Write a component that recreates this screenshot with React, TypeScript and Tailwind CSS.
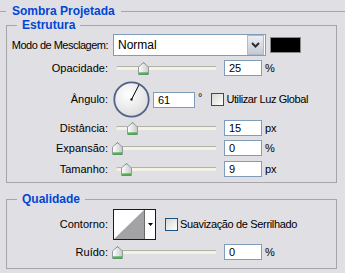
import React from "react";

const LINE = "bg-[#a6a5aa]";

function Thumb() {
  return (
    <svg width="11" height="13" viewBox="0 0 11 13" className="block">
      <defs>
        <linearGradient id="tg" x1="0" y1="0" x2="1" y2="0">
          <stop offset="0" stopColor="#ffffff" />
          <stop offset="1" stopColor="#c9c9c9" />
        </linearGradient>
      </defs>
      <path d="M0.5 5 L5.5 0.5 L10.5 5 L10.5 12.5 L0.5 12.5 Z" fill="url(#tg)" stroke="#8d9aa0" />
      <path d="M1 11 L10 11 M1 12 L10 12" stroke="#21a121" strokeWidth="1" />
      <path d="M4.5 1.5 L5.5 0.8 L6.5 1.5" stroke="#3cb43c" strokeWidth="1" fill="none" />
    </svg>
  );
}

function Slider({ pos }: { pos: number }) {
  return (
    <div className="relative w-[107px] h-[16px] flex items-center">
      <div className="ml-[3px] w-[100px] h-[4px] border-t border-[#b2b1a8] bg-[#f4f2e4] rounded-l-[2px]" />
      <div className="absolute top-[2px]" style={{ left: pos }}>
        <Thumb />
      </div>
    </div>
  );
}

function NumInput({ value, w = 38 }: { value: string; w?: number }) {
  return (
    <div
      className="h-[16px] bg-white border border-[#7f9db9] pl-[4px] leading-[14px] text-[11px]"
      style={{ width: w }}
    >
      {value}
    </div>
  );
}

function Label({ children, tight = false }: { children: React.ReactNode; tight?: boolean }) {
  return (
    <div className="w-[101px] shrink-0 flex justify-end whitespace-nowrap">
      <span className={tight ? "shrink-0 tracking-[-0.5px]" : "shrink-0"}>{children}</span>
    </div>
  );
}

function SliderRow({ label, pos, value, unit }: { label: string; pos: number; value: string; unit: string }) {
  return (
    <div className="flex items-center h-[16px]">
      <Label>{label}</Label>
      <div className="ml-[5px] w-[111px]">
        <Slider pos={pos} />
      </div>
      <NumInput value={value} />
      <span className="ml-[3px]">{unit}</span>
    </div>
  );
}

function Checkbox() {
  return (
    <div className="w-[13px] h-[13px] border border-[#1c5180] bg-gradient-to-br from-[#d8d7d0] to-white shrink-0" />
  );
}

function Group({ title, children }: { title: string; children: React.ReactNode }) {
  return (
    <div className="ml-[6px] w-[331px] border-x border-b border-[#a6a5aa]">
      <div className="flex items-center h-px -mx-px">
        <div className={`w-[11px] h-px ${LINE}`} />
        <span className="px-[5px] font-bold text-[12px] text-[#0046d5] leading-[13px] whitespace-nowrap">{title}</span>
        <div className={`flex-1 h-px ${LINE}`} />
      </div>
      {children}
    </div>
  );
}

export default function App() {
  return (
    <div
      className="w-[345px] h-[273px] bg-[#e0dfe3] text-black overflow-hidden text-[11px] leading-[13px]"
      style={{ fontFamily: '"Liberation Sans", Arial, sans-serif' }}
    >
      <div className="pt-[11px]">
        <div className="flex items-center h-px">
          <div className={`w-[6px] h-px ${LINE}`} />
          <span className="px-[6px] font-bold text-[12px] text-[#0046d5] leading-[13px] whitespace-nowrap">Sombra Projetada</span>
          <div className={`flex-1 h-px ${LINE}`} />
        </div>
      </div>

      <div className="mt-[13px]">
        <Group title="Estrutura">
          <div className="mt-[8px] h-[22px] flex items-center">
            <Label tight>Modo de Mesclagem:</Label>
            <div className="ml-[5px] w-[153px] h-[22px] bg-white border border-[#7f9db9] flex items-center">
              <span className="pl-[4px] flex-1 text-[12px]">Normal</span>
              <div className="w-[17px] h-[20px] mr-px bg-gradient-to-b from-[#eceef4] to-[#c5c9d6] border border-[#b4b9c9] flex items-center justify-center">
                <svg width="9" height="6" viewBox="0 0 9 6">
                  <path d="M1 1 L4.5 4.5 L8 1" stroke="#2d2d2d" strokeWidth="2" fill="none" />
                </svg>
              </div>
            </div>
            <div className="ml-[4px] w-[31px] h-[16px] bg-black border border-[#8a8a8a]" />
          </div>

          <div className="mt-[4px]">
            <SliderRow label="Opacidade:" pos={25} value="25" unit="%" />
          </div>

          <div className="mt-[5px] h-[37px] flex items-center">
            <Label>Ângulo:</Label>
            <div className="ml-[5px] w-[37px] h-[37px]">
              <svg width="37" height="37" viewBox="0 0 37 37">
                <defs>
                  <radialGradient id="dial" cx="0.4" cy="0.35" r="0.7">
                    <stop offset="0" stopColor="#ffffff" />
                    <stop offset="1" stopColor="#dcdcdc" />
                  </radialGradient>
                </defs>
                <circle cx="18.5" cy="18.5" r="17.2" fill="url(#dial)" stroke="#52618a" strokeWidth="1.8" />
                <line x1="18.5" y1="18.5" x2="26" y2="3.8" stroke="#000" strokeWidth="1" />
                <rect x="17.5" y="17.5" width="2" height="2" fill="#000" />
              </svg>
            </div>
            <div className="ml-[3px]">
              <NumInput value="61" w={42} />
            </div>
            <span className="ml-[3px] -mt-[4px]">°</span>
            <div className="ml-[9px]">
              <Checkbox />
            </div>
            <span className="ml-[2px] tracking-[-0.4px]">Utilizar Luz Global</span>
          </div>

          <div className="mt-[2px]">
            <SliderRow label="Distância:" pos={14} value="15" unit="px" />
          </div>
          <div className="mt-[4px]">
            <SliderRow label="Expansão:" pos={-1} value="0" unit="%" />
          </div>
          <div className="mt-[5px]">
            <SliderRow label="Tamanho:" pos={8} value="9" unit="px" />
          </div>
          <div className="h-[5px]" />
        </Group>
      </div>

      <div className="mt-[16px]">
        <Group title="Qualidade">
          <div className="mt-[9px] h-[31px] flex items-center">
            <Label>Contorno:</Label>
            <div className="ml-[5px] w-[43px] h-[31px] border border-[#1a1a1a] bg-white flex">
              <svg width="31" height="29" viewBox="0 0 31 29" className="block">
                <rect x="0" y="0" width="31" height="29" fill="#ffffff" />
                <path d="M0 29 L30 0 L30 29 Z" fill="#a3a3a6" />
                <line x1="30.5" y1="0" x2="30.5" y2="29" stroke="#6a6a6a" />
              </svg>
              <div className="flex-1 flex items-center justify-center">
                <svg width="5" height="3" viewBox="0 0 5 3">
                  <path d="M0 0 L5 0 L2.5 3 Z" fill="#000" />
                </svg>
              </div>
            </div>
            <div className="ml-[9px]">
              <Checkbox />
            </div>
            <span className="ml-[2px] tracking-[-0.35px]">Suavização de Serrilhado</span>
          </div>
          <div className="mt-[4px]">
            <SliderRow label="Ruído:" pos={-1} value="0" unit="%" />
          </div>
          <div className="h-[8px]" />
        </Group>
      </div>
    </div>
  );
}
